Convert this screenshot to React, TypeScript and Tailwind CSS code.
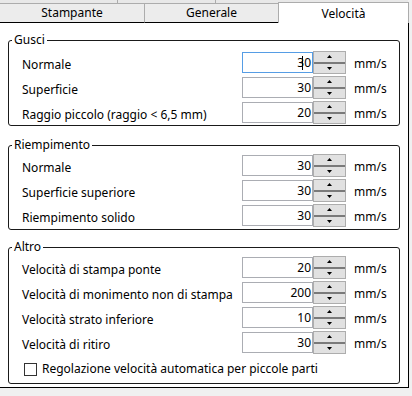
import React from 'react';

interface Row {
    label: string;
    value: string;
    focused?: boolean;
}

const gusci: Row[] = [
    { label: 'Normale', value: '30', focused: true },
    { label: 'Superficie', value: '30' },
    { label: 'Raggio piccolo (raggio < 6,5 mm)', value: '20' },
];

const riempimento: Row[] = [
    { label: 'Normale', value: '30' },
    { label: 'Superficie superiore', value: '30' },
    { label: 'Riempimento solido', value: '30' },
];

const altro: Row[] = [
    { label: 'Velocità di stampa ponte', value: '20' },
    { label: 'Velocità di monimento non di stampa', value: '200' },
    { label: 'Velocità strato inferiore', value: '10' },
    { label: 'Velocità di ritiro', value: '30' },
];

const Spinner: React.FC = () => (
    <div className="flex flex-col w-[33px] h-[23px] border border-[#adadad] bg-[#e1e1e1]">
        <div className="flex-1 flex items-center justify-center border-b-2 border-[#7a7a7a]">
            <svg width="5" height="3" viewBox="0 0 5 3"><path d="M2.5 0 L5 3 L0 3 Z" fill="#000" /></svg>
        </div>
        <div className="flex-1 flex items-center justify-center">
            <svg width="5" height="3" viewBox="0 0 5 3"><path d="M0 0 L5 0 L2.5 3 Z" fill="#000" /></svg>
        </div>
    </div>
);

const SpeedRow: React.FC<{ row: Row }> = ({ row }) => (
    <div className="flex items-center h-[25px]">
        <span className="w-[233px] pl-[13px] pt-[5px] whitespace-nowrap">{row.label}</span>
        <div className={`flex items-center justify-end w-[71px] h-[21px] border bg-white pr-[1px] ${row.focused ? 'border-[#569de5]' : 'border-[#abadb3]'}`}>
            {row.focused && <span className="w-[1px] h-[14px] bg-black -mr-[6px] ml-auto" />}
            <span>{row.value}</span>
        </div>
        <Spinner />
        <span className="ml-[8px] pt-[3px]">mm/s</span>
    </div>
);

const Group: React.FC<{ title: string; className?: string; children: React.ReactNode }> = ({ title, className, children }) => (
    <fieldset className={`border border-[#1a1a1a] rounded-[3px] mx-[8px] ${className ?? ''}`}>
        <legend className="ml-[3px] px-[2px] leading-[16px]">{title}</legend>
        {children}
    </fieldset>
);

export default function App() {
    return (
        <div className="w-[412px] h-[396px] bg-[#f0f0f0] text-[12px] leading-[16px] text-black" style={{ fontFamily: '"Noto Sans", "Open Sans", sans-serif' }}>
            {/* back row of tabs */}
            <div className="flex h-[4px] w-[408px]">
                <div className="w-[118px] border-r border-b border-[#acacac] bg-[#e8e8e8]" />
                <div className="w-[98px] border-r border-b border-[#acacac] bg-[#e8e8e8]" />
                <div className="flex-1 border-b border-[#acacac] bg-[#e8e8e8]" />
            </div>
            {/* front row of tabs */}
            <div className="flex h-[21px] w-[409px] -mt-[2px]">
                <div className="w-[145px] mt-[2px] flex items-center justify-center bg-[#ececec] border-r border-[#acacac] border-b border-b-black">
                    Stampante
                </div>
                <div className="w-[133px] mt-[2px] flex items-center justify-center bg-[#ececec] border-b border-b-black">
                    Generale
                </div>
                <div className="flex-1 flex justify-center pt-[3px] bg-white border-t border-l border-r border-[#acacac]">
                    Velocità
                </div>
            </div>
            {/* panel */}
            <div className="w-[409px] h-[365px] bg-white border-r border-b border-black pt-[9px]">
                <Group title="Gusci">
                    <div className="pt-[2px]">
                        {gusci.map((r) => <SpeedRow key={r.label} row={r} />)}
                    </div>
                </Group>
                <Group title="Riempimento" className="mt-[11px] pb-[1px]">
                    {riempimento.map((r) => <SpeedRow key={r.label} row={r} />)}
                </Group>
                <Group title="Altro" className="mt-[9px] pb-[6px]">
                    {altro.map((r) => <SpeedRow key={r.label} row={r} />)}
                    <label className="flex items-center gap-[5px] pl-[15px] pt-[6px]">
                        <span className="w-[13px] h-[13px] border border-[#333] bg-white" />
                        <span>Regolazione velocità automatica per piccole parti</span>
                    </label>
                </Group>
            </div>
        </div>
    );
}
